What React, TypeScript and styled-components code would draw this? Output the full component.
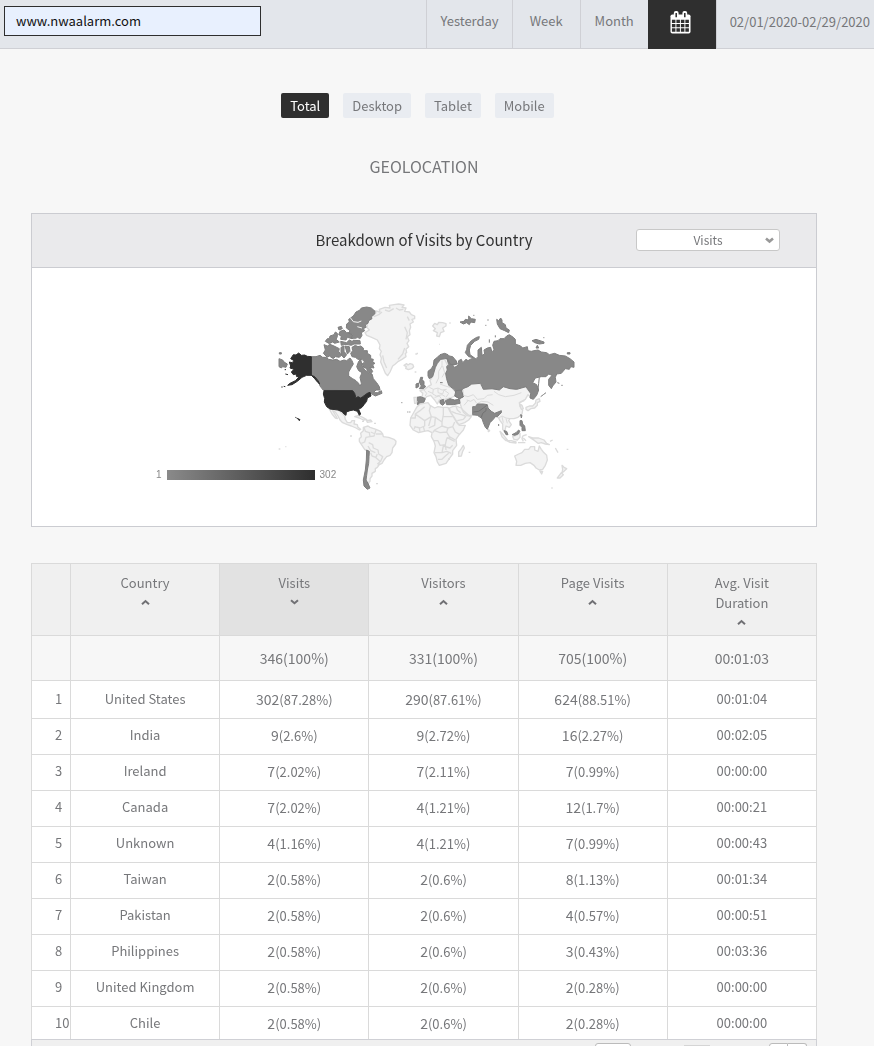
import React from "react";
import styled, { createGlobalStyle } from "styled-components";

const line = "#dadada";
const ink = "#76777a";

const GlobalStyle = createGlobalStyle`
  * { box-sizing: border-box; }
  body {
    margin: 0;
    background: #f7f7f7;
    color: ${ink};
    font-family: "Noto Sans CJK SC", "Noto Sans", sans-serif;
    font-size: 13px;
    line-height: 20px;
  }
  button, input, select { font: inherit; color: inherit; }
`;

const Shell = styled.div`
  display: flex;
  flex-direction: column;
  height: 100vh;
`;

const TopBar = styled.header`
  display: flex;
  flex: none;
  justify-content: space-between;
  height: 49px;
  background: #e3e6eb;
  border-bottom: 1px solid #cfd0d5;
`;

const SiteInput = styled.input`
  width: 257px;
  height: 30px;
  margin: 6px 0 0 4px;
  padding: 0 11px 2px;
  border: 1px solid #2e2e2e;
  border-radius: 0;
  outline: none;
  background: #e8f0fe;
  color: #111;
`;

const RangeNav = styled.nav`
  display: flex;
  margin-bottom: -1px;
`;

const RangeButton = styled.button`
  min-width: 68px;
  padding: 0 13px 6px;
  border: 0;
  border-left: 1px solid #cfd0d5;
  border-bottom: 1px solid #cfd0d5;
  background: none;
`;

const CalendarButton = styled.button`
  display: flex;
  align-items: center;
  justify-content: center;
  width: 68px;
  padding: 0 2px 5px 0;
  border: 0;
  background: #2f2f2f;
`;

const DateRange = styled.div`
  display: flex;
  align-items: center;
  padding: 0 4px 6px 13px;
  border-left: 1px solid #cfd0d5;
`;

const Main = styled.main`
  flex: 1;
  min-height: 0;
  overflow-y: auto;
  scrollbar-width: none;
  padding: 44px 57px 0 31px;
`;

const DeviceTabs = styled.div`
  display: flex;
  justify-content: center;
  gap: 14px;
  padding-right: 13px;
`;

const DeviceTab = styled.button<{ $active?: boolean }>`
  height: 25px;
  padding: 0 9px;
  border: 0;
  border-radius: 2px;
  background: ${(p) => (p.$active ? "#2f2f2f" : "#e9ecf1")};
  color: ${(p) => (p.$active ? "#fff" : ink)};
`;

const SectionTitle = styled.h1`
  margin: 36px 0 34px;
  font-size: 16px;
  font-weight: 400;
  line-height: 25px;
  text-align: center;
`;

const Panel = styled.section`
  margin-bottom: 36px;
  border: 1px solid #cbccd1;
  background: #fff;
`;

const PanelHeader = styled.div`
  display: grid;
  grid-template-columns: 1fr auto 1fr;
  align-items: center;
  height: 54px;
  padding: 0 36px 2px;
  border-bottom: 1px solid #cbccd1;
  background: #eaeaec;
`;

const PanelTitle = styled.h2`
  grid-column: 2;
  margin: 0;
  color: #333;
  font-size: 15px;
  font-weight: 400;
`;

const SelectBox = styled.label`
  position: relative;
  justify-self: end;
  width: 144px;
  height: 22px;
  svg {
    position: absolute;
    top: 8px;
    right: 6px;
    pointer-events: none;
  }
`;

const MetricSelect = styled.select`
  display: block;
  width: 100%;
  height: 100%;
  padding: 0;
  appearance: none;
  border: 1px solid #c8c8c8;
  border-radius: 3px;
  background: #fff;
  font-size: 12px;
  line-height: 18px;
  text-align: center;
  text-align-last: center;
`;

const MapArea = styled.div`
  position: relative;
  width: 548px;
  margin: 0 auto;
  padding: 22px 0 26px;
  svg { display: block; }
`;

const Legend = styled.div`
  position: absolute;
  left: 6px;
  bottom: 45px;
  display: flex;
  align-items: center;
  gap: 5px;
  color: #888;
  font-family: "Liberation Sans", sans-serif;
  font-size: 10px;
  line-height: 12px;
`;

const LegendBar = styled.div`
  width: 148px;
  height: 10px;
  background: linear-gradient(to right, #8a8a8a, #2e2e2e);
`;

const TableScroll = styled.div`
  max-height: 476px;
  overflow-y: auto;
  scrollbar-width: none;
`;

const Table = styled.table`
  width: 100%;
  table-layout: fixed;
  border-collapse: collapse;
  background: #fff;
  text-align: center;
  th, td {
    border: 1px solid ${line};
    font-weight: 400;
  }
`;

const RankCol = styled.col`
  width: 39px;
`;

const HeadCell = styled.th<{ $sorted?: boolean }>`
  height: 72px;
  padding: 9px 36px 2px;
  background: ${(p) => (p.$sorted ? "#e2e2e2" : "#f0f0f0")};
  vertical-align: top;
`;

const SortButton = styled.button`
  display: block;
  width: 100%;
  padding: 0;
  border: 0;
  background: none;
  svg {
    display: block;
    margin: 6px auto 0;
  }
`;

const TotalCell = styled.td`
  height: 45px;
  padding: 0;
  background: #f7f7f7;
  font-size: 14px;
`;

const Cell = styled.td`
  padding: 0 0 4px;
`;

const RankCell = styled.td`
  padding: 0 0 4px 23px;
  text-align: left;
`;

const NumberCell = styled.td`
  padding: 0 0 2px;
`;

const Row = styled.tr`
  height: 36px;
  &:first-child { height: 38px; }
  &:first-child td { padding-top: 2px; }
`;

const Count = styled.span`
  font-size: 14px;
`;

const Pager = styled.footer`
  display: flex;
  height: 34px;
  padding: 3px 9px 0 0;
  justify-content: flex-end;
  border: 1px solid #cfd0d5;
  background: #f0f0f0;
`;

const PageSize = styled.select`
  width: 36px;
  height: 24px;
  margin-right: 53px;
  appearance: none;
  border: 1px solid #bbb;
  border-radius: 3px;
  background: #fff;
`;

const PageInput = styled.input`
  width: 26px;
  height: 20px;
  margin: 2px 59px 0 0;
  padding: 0;
  border: 1px solid #d5d5d5;
  background: #fff;
`;

const PageButton = styled.button<{ $side: "left" | "right" }>`
  width: 19px;
  height: 24px;
  padding: 0;
  border: 1px solid #bbb;
  border-left-width: ${(p) => (p.$side === "left" ? "1px" : "0")};
  border-radius: ${(p) => (p.$side === "left" ? "3px 0 0 3px" : "0 3px 3px 0")};
  background: #fff;
`;

const CalendarIcon = () => (
  <svg width="21" height="23" viewBox="0 0 22 24" aria-hidden="true">
    <rect x="0.500" y="3.500" width="21" height="20" rx="2" fill="#fff" />
    <rect x="4" y="0" width="5" height="8" rx="2" fill="#fff" />
    <rect x="13" y="0" width="5" height="8" rx="2" fill="#fff" />
    <path d="M6.500 2V6.500M15.500 2V6.500" stroke="#2f2f2f" strokeWidth="1.600" />
    <path
      fill="#2f2f2f"
      d="M2 9h3.700v3.500H2zM6.700 9h3.700v3.500H6.700zM11.400 9h3.700v3.500h-3.700zM16.100 9h3.700v3.500h-3.700zM2 13.500h3.700v3.500H2zM6.700 13.500h3.700v3.500H6.700zM11.400 13.500h3.700v3.500h-3.700zM16.100 13.500h3.700v3.500h-3.700zM2 18h3.700v3.700H2zM6.700 18h3.700v3.700H6.700zM11.400 18h3.700v3.700h-3.700zM16.100 18h3.700v3.700h-3.700z"
    />
  </svg>
);

const SortIcon = ({ down }: { down?: boolean }) => (
  <svg width="9" height="7" viewBox="0 0 9 7" aria-hidden="true">
    <path
      d={down ? "M1 1.300L4.500 4.300L8 1.300" : "M1 5.200L4.500 2L8 5.200"}
      fill="none"
      stroke="#707074"
      strokeWidth="2"
    />
  </svg>
);

const land = { fill: "#f3f3f3", stroke: "#dbdbdb", strokeWidth: 4 };
const visited = { fill: "#888", stroke: "#7e7e7e", strokeWidth: 3 };
const top = { fill: "#2f2f2f", stroke: "#2f2f2f", strokeWidth: 3 };

const WorldMap = () => (
  <svg
    width="548"
    height="210"
    viewBox="-360 0 1644 630"
    role="img"
    aria-label="Visits by country"
    strokeLinejoin="round"
  >
    {/* the Americas, Greenland and Iceland */}
    <g {...land}>
      <path d="M303 83L318 68L314 62L330 66L328 58L345 52L360 54L358 46L372 44L386 42L402 45L396 52L408 54L404 64L418 66L424 74L434 78L434 86L426 88L430 96L420 102L422 112L418 122L420 134L412 140L417 152L411 160L416 170L408 178L410 188L406 190L408 200L396 208L385 214L376 222L368 228L360 246L353 257L346 250L342 240L338 230L332 216L334 204L330 194L334 184L328 176L330 165L322 150L305 142L290 136L285 128L298 120L290 112L292 106L287 98Z" />
      <path d="M312 80l14 -6l10 -8M345 60l12 4l14 -8M378 54l10 6l12 -2M412 80l6 12M404 110l8 18l-4 20M404 174l-6 18l-14 16M338 196l4 20l8 18" fill="none" />
      <path d="M402 226l8 -5l4 4l6 -4l8 2l3 7l-6 6l-10 3l-8 -4l2 -5z" />
      <path d="M436 192h6M434 246h5" />
      <g transform="translate(0 300)">
        <path d="M178 57L190 58L204 60L214 67L224 78L226 88L232 98L242 98L246 92L254 92L252 102L262 104L264 112L272 118L268 120L258 114L244 108L232 104L218 98L210 90L204 78L196 66L188 62L198 78L202 86L196 84L186 72Z" />
        <path d="M254 80L266 76L278 82L290 89L280 90L268 84ZM290 92L302 90L306 95L292 97ZM276 94h6M312 100h6" />
        <path d="M280 112L294 108L300 112L318 118L332 124L338 132L340 140L356 142L372 148L378 154L377 162L368 174L366 188L360 196L350 200L342 210L336 220L328 224L322 232L316 236L316 244L306 250L306 258L300 266L300 274L296 278L294 292L288 278L288 250L292 225L294 185L284 178L276 166L268 154L268 146L274 140L272 130L280 122Z" />
        <path d="M282 112l4 12l12 4l2 12l-12 2l-4 14l-10 4M300 140l12 -2l6 -18M318 132l18 0M296 158l12 6l2 10l14 6l2 12l12 8l-6 14l-10 8M294 168l8 14l14 6M302 188l4 10l12 4l4 -10M316 202l14 12l-6 14M302 126l14 6" fill="none" />
        <path d="M318 281h6M240 138h6M26 177h5M46 170h3" />
      </g>
    </g>
    <g {...visited}>
      <path d="M124 200L138 200L150 196L158 202L168 202L176 208L188 210L200 208L210 214L222 210L230 212L240 204L246 212L250 222L244 232L236 246L236 258L248 266L258 272L266 280L270 290L274 280L270 262L276 248L266 242L260 230L266 214L272 208L276 226L284 240L298 250L306 252L310 266L320 278L328 290L330 300L318 300L310 308L322 308L334 302L336 310L316 318L302 310L286 312L276 322L262 326L254 310L244 302L160 301L150 288L146 275L136 260L124 256Z" />
      <path d="M246 172L256 166L264 170L272 168L280 174L280 182L292 182L292 190L302 196L302 206L310 208L308 216L315 220L308 224L312 234L300 232L308 244L304 250L292 244L290 236L282 232L276 222L284 216L276 208L264 208L256 202L246 200L242 190L248 182Z" />
      <path d="M162 164L172 168L180 163L192 168L208 176L206 184L214 196L208 202L196 200L190 206L178 198L172 202L160 190L166 180ZM213 172L222 168L222 184L230 194L222 204L213 194ZM225 168L238 170L240 184L232 192ZM166 154L172 146L178 146L180 138L192 134L196 126L202 130L202 140L198 148L208 156L194 160L188 156L178 161ZM204 112l10 -3l3 7l-10 4zM210 124L222 120L230 128L240 128L248 138L246 146L232 142L228 150L212 148L214 138L206 134ZM212 154L230 158L238 150L246 154L252 151L270 152L271 162L252 162L244 166L228 163L214 166Z" />
      <path d="M230 102L238 96L236 88L250 78L258 66L270 60L274 54L290 51L304 54L315 64L314 72L304 80L306 86L296 92L294 100L286 104L288 112L280 116L284 122L274 128L276 136L270 146L262 142L254 148L244 144L248 134L236 130L240 122L229 114Z" />
      <path d="M240 82l10 13l14 2l10 -4M250 148h20M262 110l14 4" fill="none" stroke="#f4f4f4" />
      <path d="M27 206L38 210L42 216L52 222L48 232L38 230L34 234L27 230ZM28 188h6v4h-6z" />
      <path d="M290 480L298 484L297 500L296 520L292 540L290 556L288 570L294 580L300 594L292 598L282 588L280 570L286 540L289 510Z" />
    </g>
    <g {...top}>
      <path d="M124 200L112 199L104 195L94 196L86 189L78 195L70 194L62 206L72 212L66 218L58 216L62 228L60 234L72 238L64 246L70 254L78 252L80 260L88 260L76 272L60 280L53 286L66 284L82 274L96 262L110 256L124 256L134 260L144 272L149 282L144 278L134 266L124 256ZM46 252l8 2M44 239h4M34 291h4M41 289l5 1" />
      <path d="M162 302L248 302L254 310L258 324L264 320L272 324L278 320L292 310L300 307L303 318L292 324L290 334L282 344L276 352L266 358L272 372L268 376L262 364L250 360L240 362L229 366L228 376L222 372L216 365L204 360L180 357L170 350L163 336L164 326L160 312Z" />
      <path d="M76 382l4 2M82 385l8 4l-2 3z" />
    </g>
    {/* Europe and northern Asia */}
    <g transform="translate(390 0)">
      <g {...land}>
        <path d="M98 108L104 100L112 104L116 97L128 98L138 101L138 108L128 114L132 124L122 128L118 140L110 138L112 128L100 122L106 116ZM148 99h4M118 163h2M50 190h4" />
        <path d="M96 262L102 246L108 226L120 208L134 208L142 224L142 240L138 250L140 270L152 290L170 310L166 318L150 324L134 328L118 330L112 342L104 330L92 316L80 320L76 324L66 322L68 310L60 302L74 298L84 290L94 284L90 272Z" />
        <path d="M188 296L200 290L215 282L240 280L250 296L290 298L310 290L350 298L376 290L392 310L394 324L384 314L376 328L358 338L360 350L368 360L366 372L354 382L342 386L330 386L326 392L334 404L328 412L318 408L314 426L308 418L308 402L300 392L296 384L270 364L218 376L206 376L186 358L180 340L180 328L190 316Z" />
      </g>
      <g {...visited}>
        <path d="M140 266L137 250L142 240L140 230L146 224L140 204L150 208L168 212L170 222L158 226L164 232L174 226L176 212L184 208L188 218L198 208L204 212L214 206L228 206L234 200L234 180L244 172L246 196L254 192L252 180L262 174L272 172L276 188L282 178L278 166L282 154L294 152L300 146L312 146L320 138L328 134L340 142L346 148L346 162L362 168L368 174L382 170L384 182L394 184L402 182L414 180L424 186L440 188L448 194L464 190L478 196L496 198L510 206L522 216L522 232L512 230L508 238L496 236L484 250L470 252L466 262L468 276L458 288L454 296L446 286L446 268L456 256L446 252L438 260L424 260L406 264L398 278L410 284L416 300L410 316L400 328L390 324L392 310L378 290L364 294L350 298L330 296L310 290L298 300L276 296L250 298L242 280L215 282L204 290L188 296L184 304L190 320L178 326L166 318L170 310L162 298L146 286Z" />
        <path d="M196 188L200 178L202 166L214 152L230 142L238 140L236 148L224 154L212 166L208 180L210 194L224 204L206 200ZM290 88L296 92L302 84L306 90L306 98L316 104L318 114L328 120L326 128L314 122L300 116L292 102ZM180 96L192 94L196 88L206 90L206 78L214 86L226 88L224 98L212 96L208 104L200 98L190 102ZM220 76h3M262 90h4M256 106h3M396 152L408 148L420 152L432 156L432 160L418 162L404 158ZM408 174l8 0l-4 -8zM430 143h3M502 188h8v4h-8zM268 148v10M286 136v6M472 278l6 2M484 286h4" />
        <path d="M418 262L416 280L414 298M422 320l8 -6l8 -6" fill="none" />
        <path d="M84 258L84 244L94 236L100 226L102 210L112 202L120 194L134 190L144 194L148 198L158 200L168 212L172 222L152 224L142 206L134 206L122 208L112 220L106 232L102 246L98 260L88 266ZM120 278l8 0" />
        <path d="M62 262L68 262L66 270L72 274L72 284L77 290L70 296L58 296L64 288L58 276ZM48 282L56 279L56 290L48 294Z" />
        <path d="M50 322L62 320L76 326L72 336L64 346L52 344L54 334L50 330ZM120 332L130 328L134 340L128 346L120 340ZM136 332L150 326L164 330L178 328L180 340L160 344L140 344ZM164 318L168 302L184 300L190 320L178 326Z" />
      </g>
      <path
        {...land}
        strokeWidth={3}
        fill="none"
        d="M108 280l8 -16l0 -20l10 -16l0 -16M128 228l6 20l-8 14M88 292l12 6l14 -4l12 6l14 -2M100 298l-2 14l12 6l16 -4l10 6M114 294l0 14l14 4l4 -12l14 10l-8 12M120 282l16 6l14 4M84 304l14 6M104 322l14 -4l6 8M72 300l8 10l-4 8M190 316l14 4l16 -6l12 14l20 -2l10 -10l16 -2M200 330l12 4l10 -6l8 12M282 304l14 10l20 6l26 -4l22 -8M230 342l14 -8l20 2l16 10M204 332l-12 14M360 338l14 -6M296 384l10 -6l12 6l12 2M306 380l4 18M318 386l4 14"
      />
    </g>
    {/* Africa, southern Asia and Oceania */}
    <g transform="translate(390 300)">
      <g {...land}>
        <path d="M60 42L72 40L84 38L90 46L104 54L114 50L128 52L144 52L150 64L162 84L172 100L178 106L196 106L190 120L176 136L168 148L170 166L158 182L158 192L148 206L138 220L118 226L112 216L108 200L102 188L106 168L102 154L94 140L96 128L84 122L72 124L56 128L40 120L30 106L32 84L42 66L50 52Z" />
        <path fill="none" d="M32 84h14l0 -12l14 -10l14 -12M48 74l26 18l20 -12l-6 -18l4 -16M74 92l0 16l-14 6l-16 -4M94 80l12 2l20 14l4 -22l0 -22M130 80h28M94 80l-8 28M106 82l-2 24l-18 8M126 96l0 12l-22 12l-6 8M126 108l18 6l14 -4l6 -14M104 122l16 6l20 -2l4 -12M140 126l8 14l18 10M158 110l8 16l14 8M100 152h14l6 14l16 -2l4 -18l12 -4M104 188h22l4 -20l20 6l8 -8M126 188l14 -4l14 6M114 208l12 0l10 -10l10 -8M136 164l2 16M140 142l24 12M58 114l2 12M70 110l4 14M46 108l-4 10M144 206l6 2" />
        <path d="M148 54L158 50L168 48L184 54L190 66L200 76L214 80L206 90L194 98L176 104L170 94L160 78L152 66Z" />
        <path fill="none" d="M154 64l14 6l16 4l12 4M172 92l18 -4l8 -10M168 48l4 12l10 8" />
        <path d="M190 166L193 174L188 184L184 198L176 199L176 186L184 176ZM265 118l4 4l-4 3zM206 187h5M42 22l7 0l0 18l-5 0z" />
        <path d="M300 124L308 132L316 142L322 150L318 152L306 140ZM320 152L334 152L348 156L348 159L330 157ZM354 158h22M338 140L348 136L360 130L360 142L352 150L342 148ZM368 138l12 -4M368 138l-2 8l4 8M370 144l8 8M386 140l12 4L416 144L432 150L440 160L448 164L436 162L424 158L414 160L404 152ZM450 154l8 -4M466 174l8 14M500 178h5" />
        <path d="M344 198L356 192L366 188L374 178L386 178L392 170L404 170L404 180L414 184L418 168L424 178L430 186L440 196L442 210L436 226L428 238L418 240L408 234L402 226L390 218L376 220L362 226L348 226L350 214ZM420 244l8 0l-3 8zM486 226L492 232L500 236L492 244L486 248L488 238ZM484 248L490 254L480 264L472 264ZM454 294h4" />
        <path d="M378 52L388 48L398 48L406 40L408 30L418 26L420 34L412 38L412 46L404 54L392 56L384 62L378 58ZM360 42l6 4l4 10l-6 2z" />
      </g>
      <g {...visited}>
        <path d="M218 50L226 50L232 42L250 42L262 44L264 54L274 64L284 70L294 66L304 62L304 68L298 74L292 80L286 80L280 88L270 98L266 108L262 118L256 112L250 98L246 86L238 80L232 76L218 74Z" />
        <path fill="none" stroke="#727272" d="M220 66l16 -2l14 -10l10 -8M244 82l4 -12l10 -8l0 -8" />
        <path d="M362 74l4 2l-2 8zM360 92L366 92L368 102L374 108L376 122L366 122L366 112L360 106ZM312 122l8 2l4 10l-6 0zM336 134L348 128L356 120L360 124L354 132L344 136ZM296 102v6M22 66h3M28 66h3M4 38h3" />
      </g>
    </g>
  </svg>
);

type Metric = [string, string];
const rows: { country: string; visits: Metric; visitors: Metric; pages: Metric; time: string }[] = [
  { country: "United States", visits: ["302", "87.28%"], visitors: ["290", "87.61%"], pages: ["624", "88.51%"], time: "00:01:04" },
  { country: "India", visits: ["9", "2.6%"], visitors: ["9", "2.72%"], pages: ["16", "2.27%"], time: "00:02:05" },
  { country: "Ireland", visits: ["7", "2.02%"], visitors: ["7", "2.11%"], pages: ["7", "0.99%"], time: "00:00:00" },
  { country: "Canada", visits: ["7", "2.02%"], visitors: ["4", "1.21%"], pages: ["12", "1.7%"], time: "00:00:21" },
  { country: "Unknown", visits: ["4", "1.16%"], visitors: ["4", "1.21%"], pages: ["7", "0.99%"], time: "00:00:43" },
  { country: "Taiwan", visits: ["2", "0.58%"], visitors: ["2", "0.6%"], pages: ["8", "1.13%"], time: "00:01:34" },
  { country: "Pakistan", visits: ["2", "0.58%"], visitors: ["2", "0.6%"], pages: ["4", "0.57%"], time: "00:00:51" },
  { country: "Philippines", visits: ["2", "0.58%"], visitors: ["2", "0.6%"], pages: ["3", "0.43%"], time: "00:03:36" },
  { country: "United Kingdom", visits: ["2", "0.58%"], visitors: ["2", "0.6%"], pages: ["2", "0.28%"], time: "00:00:00" },
  { country: "Chile", visits: ["2", "0.58%"], visitors: ["2", "0.6%"], pages: ["2", "0.28%"], time: "00:00:00" },
];

const columns = ["Country", "Visits", "Visitors", "Page Visits", "Avg. Visit Duration"];
const totals = ["", "", "346(100%)", "331(100%)", "705(100%)", "00:01:03"];

const MetricCell = ({ value }: { value: Metric }) => (
  <NumberCell>
    <Count>{value[0]}</Count>({value[1]})
  </NumberCell>
);

export default function App() {
  return (
    <Shell>
      <GlobalStyle />
      <TopBar>
        <SiteInput aria-label="Website" defaultValue="www.nwaalarm.com" />
        <RangeNav>
          <RangeButton>Yesterday</RangeButton>
          <RangeButton>Week</RangeButton>
          <RangeButton>Month</RangeButton>
          <CalendarButton aria-label="Choose dates">
            <CalendarIcon />
          </CalendarButton>
          <DateRange>02/01/2020-02/29/2020</DateRange>
        </RangeNav>
      </TopBar>
      <Main>
        <DeviceTabs>
          <DeviceTab $active>Total</DeviceTab>
          <DeviceTab>Desktop</DeviceTab>
          <DeviceTab>Tablet</DeviceTab>
          <DeviceTab>Mobile</DeviceTab>
        </DeviceTabs>
        <SectionTitle>GEOLOCATION</SectionTitle>
        <Panel>
          <PanelHeader>
            <PanelTitle>Breakdown of Visits by Country</PanelTitle>
            <SelectBox>
              <MetricSelect aria-label="Metric" defaultValue="Visits">
                <option>Visits</option>
                <option>Visitors</option>
                <option>Page Visits</option>
              </MetricSelect>
              <svg width="9" height="7" viewBox="0 0 9 7" aria-hidden="true">
                <path d="M1 1.500L4.500 4.500L8 1.500" fill="none" stroke="#999" strokeWidth="2.600" />
              </svg>
            </SelectBox>
          </PanelHeader>
          <MapArea>
            <WorldMap />
            <Legend>
              <span>1</span>
              <LegendBar />
              <span>302</span>
            </Legend>
          </MapArea>
        </Panel>
        <TableScroll>
          <Table>
            <colgroup>
              <RankCol />
              {columns.map((c) => (
                <col key={c} />
              ))}
            </colgroup>
            <thead>
              <tr>
                <HeadCell as="td" />
                {columns.map((c) => (
                  <HeadCell key={c} $sorted={c === "Visits"} scope="col">
                    <SortButton>
                      {c}
                      <SortIcon down={c === "Visits"} />
                    </SortButton>
                  </HeadCell>
                ))}
              </tr>
              <tr>
                {totals.map((t, i) => (
                  <TotalCell key={i}>{t}</TotalCell>
                ))}
              </tr>
            </thead>
            <tbody>
              {rows.map((r, i) => (
                <Row key={r.country}>
                  <RankCell>{i + 1}</RankCell>
                  <Cell>{r.country}</Cell>
                  <MetricCell value={r.visits} />
                  <MetricCell value={r.visitors} />
                  <MetricCell value={r.pages} />
                  <Cell>{r.time}</Cell>
                </Row>
              ))}
            </tbody>
          </Table>
        </TableScroll>
        <Pager>
          <PageSize aria-label="Rows per page" />
          <PageInput aria-label="Page" />
          <PageButton $side="left" aria-label="Previous page" />
          <PageButton $side="right" aria-label="Next page" />
        </Pager>
      </Main>
    </Shell>
  );
}
